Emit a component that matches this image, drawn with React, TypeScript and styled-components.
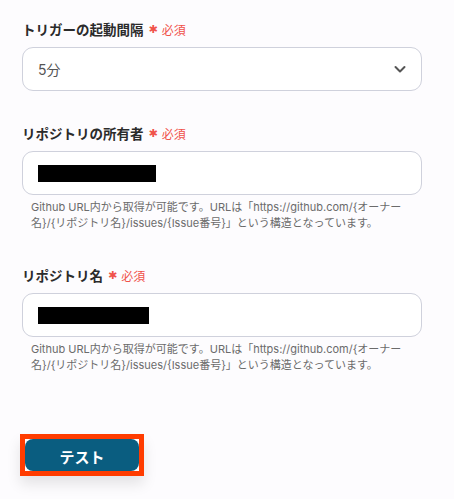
import * as React from 'react';
import styled, { createGlobalStyle } from 'styled-components';

const GlobalStyle = createGlobalStyle`
  html, body {
    margin: 0;
    padding: 0;
    background-color: #fdfcfe;
  }

  body {
    font-family: Inter, 'Noto Sans CJK JP', sans-serif;
  }
`;

const Page = styled.div`
  width: 454px;
  min-height: 499px;
  box-sizing: border-box;
  padding: 19px 32px 0 22px;
`;

const Field = styled.section<{ $gap: number }>`
  display: flex;
  flex-direction: column;
  margin-bottom: ${(p) => p.$gap}px;
`;

const Label = styled.div`
  display: flex;
  align-items: center;
  height: 20px;
  margin-bottom: 8px;

  font-family: 'Noto Sans CJK JP', sans-serif;
  font-size: 13.5px;
  font-weight: bold;
  color: #2b2b2b;
`;

const Required = styled.span`
  display: inline-flex;
  align-items: center;
  margin-left: 5px;

  font-size: 12px;
  font-weight: normal;
  color: #f0524a;
`;

const Star = styled.span`
  font-family: 'DejaVu Sans', sans-serif;
  font-size: 11px;
  margin-right: 4px;
  line-height: 1;
`;

const Box = styled.div`
  height: 44px;
  box-sizing: border-box;

  background-color: #ffffff;
  border: 1px solid #cfd1dc;
  border-radius: 11px;

  padding: 0 14px 0 15px;

  display: flex;
  align-items: center;
  justify-content: space-between;

  font-size: 14px;
  color: #555555;
`;

const Redacted = styled.div`
  height: 17px;
  background-color: #000000;
`;

const Help = styled.p`
  margin: 4px 0 0;
  padding: 0 9px;

  font-size: 11px;
  line-height: 16px;
  color: #6b6b6b;
`;

const ButtonFrame = styled.div`
  display: inline-flex;
  border: 5px solid #ff3c00;
  margin-left: -2px;
  box-shadow: 0 8px 14px rgba(0, 0, 0, 0.1);
`;

const TestButton = styled.button`
  width: 114px;
  height: 32px;
  padding: 2px 0 0;

  background-color: #0a5d80;
  border: none;
  border-radius: 8px;

  font-family: 'Noto Sans CJK JP', sans-serif;
  font-size: 15px;
  font-weight: bold;
  color: #ffffff;
`;

const Chevron = () => (
  <svg width="14" height="14" viewBox="0 0 14 14" fill="none">
    <path
      d="M2.5 5 L7 9.5 L11.5 5"
      stroke="#555555"
      strokeWidth="2"
      strokeLinecap="round"
      strokeLinejoin="round"
    />
  </svg>
);

const HELP_TEXT =
  'Github URL内から取得が可能です。URLは「https://github.com/{オーナー名}/{リポジトリ名}/issues/{Issue番号}」という構造となっています。';

const RequiredMark = () => (
  <Required>
    <Star>✱</Star>必須
  </Required>
);

const App: React.FC = () => {
  return (
    <>
      <GlobalStyle />
      <Page>
        <Field $gap={32}>
          <Label>
            トリガーの起動間隔
            <RequiredMark />
          </Label>
          <Box>
            <span>5分</span>
            <Chevron />
          </Box>
        </Field>

        <Field $gap={34}>
          <Label>
            リポジトリの所有者
            <RequiredMark />
          </Label>
          <Box>
            <Redacted style={{ width: 118 }} />
          </Box>
          <Help>{HELP_TEXT}</Help>
        </Field>

        <Field $gap={61}>
          <Label>
            リポジトリ名
            <RequiredMark />
          </Label>
          <Box>
            <Redacted style={{ width: 111 }} />
          </Box>
          <Help>{HELP_TEXT}</Help>
        </Field>

        <ButtonFrame>
          <TestButton>テスト</TestButton>
        </ButtonFrame>
      </Page>
    </>
  );
};

export default App;
